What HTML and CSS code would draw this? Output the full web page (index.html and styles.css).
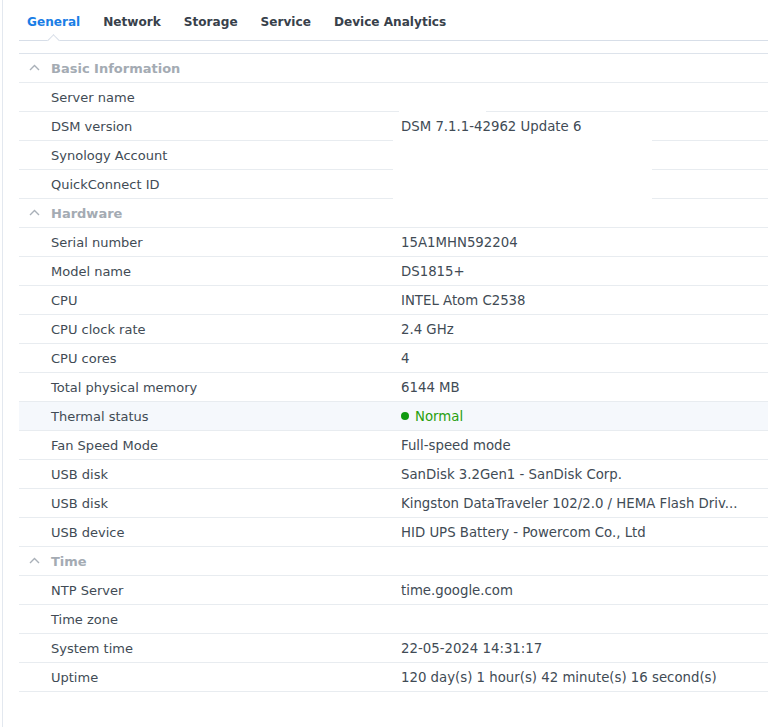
FILE: index.html
```html
<!DOCTYPE html>
<html>
<head>
<meta charset="utf-8">
<link rel="stylesheet" href="styles.css">
</head>
<body>
<div class="window">
  <div class="tabs">
    <div class="tab active">General</div>
    <div class="tab">Network</div>
    <div class="tab">Storage</div>
    <div class="tab">Service</div>
    <div class="tab">Device Analytics</div>
  </div>
  <div class="sheet">
    <div class="section">
      <div class="head"><span class="chev"><svg width="11" height="7" viewBox="0 0 11 7"><path d="M1 6 L5.5 1.5 L10 6" fill="none" stroke="#a9b0b8" stroke-width="1.4"/></svg></span>Basic Information</div>
      <div class="row"><div class="label">Server name</div><div class="value"></div></div>
      <div class="row"><div class="label">DSM version</div><div class="value">DSM 7.1.1-42962 Update 6</div></div>
      <div class="row"><div class="label">Synology Account</div><div class="value"></div></div>
      <div class="row"><div class="label">QuickConnect ID</div><div class="value"></div></div>
      <div class="mask mask-a"></div>
      <div class="mask mask-b"></div>
    </div>
    <div class="section">
      <div class="head"><span class="chev"><svg width="11" height="7" viewBox="0 0 11 7"><path d="M1 6 L5.5 1.5 L10 6" fill="none" stroke="#a9b0b8" stroke-width="1.4"/></svg></span>Hardware</div>
      <div class="row"><div class="label">Serial number</div><div class="value">15A1MHN592204</div></div>
      <div class="row"><div class="label">Model name</div><div class="value">DS1815+</div></div>
      <div class="row"><div class="label">CPU</div><div class="value">INTEL Atom C2538</div></div>
      <div class="row"><div class="label">CPU clock rate</div><div class="value">2.4 GHz</div></div>
      <div class="row"><div class="label">CPU cores</div><div class="value">4</div></div>
      <div class="row"><div class="label">Total physical memory</div><div class="value">6144 MB</div></div>
      <div class="row hover"><div class="label">Thermal status</div><div class="value ok"><span class="dot"></span>Normal</div></div>
      <div class="row"><div class="label">Fan Speed Mode</div><div class="value">Full-speed mode</div></div>
      <div class="row"><div class="label">USB disk</div><div class="value">SanDisk 3.2Gen1 - SanDisk Corp.</div></div>
      <div class="row"><div class="label">USB disk</div><div class="value">Kingston DataTraveler 102/2.0 / HEMA Flash Driv...</div></div>
      <div class="row"><div class="label">USB device</div><div class="value">HID UPS Battery - Powercom Co., Ltd</div></div>
    </div>
    <div class="section">
      <div class="head"><span class="chev"><svg width="11" height="7" viewBox="0 0 11 7"><path d="M1 6 L5.5 1.5 L10 6" fill="none" stroke="#a9b0b8" stroke-width="1.4"/></svg></span>Time</div>
      <div class="row"><div class="label">NTP Server</div><div class="value">time.google.com</div></div>
      <div class="row"><div class="label">Time zone</div><div class="value"></div></div>
      <div class="row"><div class="label">System time</div><div class="value">22-05-2024 14:31:17</div></div>
      <div class="row"><div class="label">Uptime</div><div class="value">120 day(s) 1 hour(s) 42 minute(s) 16 second(s)</div></div>
    </div>
  </div>
</div>
</body>
</html>
```

FILE: styles.css
```css
html, body {
  margin: 0;
  padding: 0;
  background: #ffffff;
}
body {
  font-family: "DejaVu Sans", Verdana, sans-serif;
  font-size: 13px;
  color: #414b55;
}
.window {
  margin-left: 2px;
  border-left: 1px solid #e3e8ef;
  min-height: 727px;
  box-sizing: border-box;
  padding: 0 14px 0 16px;
}
.tabs {
  display: flex;
  height: 40px;
  align-items: center;
  border-bottom: 1px solid #d7dee8;
  padding-left: 8px;
  gap: 23px;
}
.tab {
  font-weight: bold;
  font-size: 12.1px;
  color: #38414b;
  position: relative;
  height: 40px;
  line-height: 44px;
}
.tab.active {
  color: #1a7ee6;
}
.tab.active::after {
  content: "";
  position: absolute;
  left: 50%;
  bottom: -5px;
  width: 8px;
  height: 8px;
  margin-left: -5px;
  background: #ffffff;
  border-left: 1px solid #d7dee8;
  border-top: 1px solid #d7dee8;
  transform: rotate(45deg);
}
.sheet {
  margin-top: 12px;
  border-top: 1px solid #dde3eb;
}
.section {
  position: relative;
}
.head, .row {
  display: flex;
  align-items: center;
  height: 28px;
  border-bottom: 1px solid #e8ecf0;
}
.head {
  font-weight: bold;
  color: #a4abb3;
}
.chev {
  width: 32px;
  display: flex;
  justify-content: flex-start;
  padding-left: 10px;
  box-sizing: border-box;
  margin-top: -2px;
}
.chev svg {
  display: block;
}
.label {
  width: 382px;
  padding-left: 32px;
  box-sizing: border-box;
  flex: none;
}
.value {
  flex: 1;
  white-space: nowrap;
  overflow: hidden;
  display: flex;
  align-items: center;
  font-size: 13.3px;
}
.row.hover {
  background: #f5f8fc;
}
.value.ok {
  color: #28a00e;
}
.dot {
  width: 8px;
  height: 8px;
  border-radius: 50%;
  background: #109a10;
  margin: 0 6px 0 0;
  flex: none;
}
.mask {
  position: absolute;
  background: #ffffff;
}
.mask-a {
  left: 380px;
  top: 40px;
  width: 87px;
  height: 20px;
}
.mask-b {
  left: 374px;
  top: 85px;
  width: 259px;
  height: 62px;
}
```
